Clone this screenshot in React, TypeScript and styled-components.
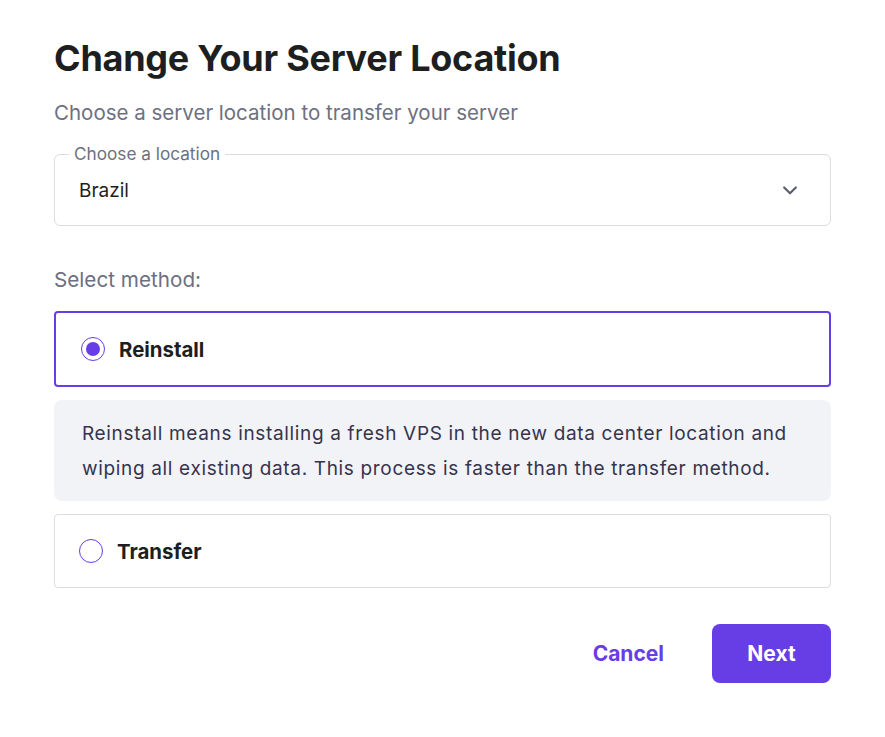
import React, { useState } from "react";
import styled, { createGlobalStyle } from "styled-components";

const Global = createGlobalStyle`
  html, body { margin: 0; padding: 0; background: #ffffff; }
  body { font-family: "Inter", "Noto Sans", sans-serif; color: #1d1e20; }
  * { box-sizing: border-box; }
`;

const Page = styled.div`
  width: 885px;
  padding: 36px 54px 0 54px;
  display: flex;
  flex-direction: column;
`;

const Title = styled.h1`
  margin: 0;
  font-family: "Inter", sans-serif;
  font-weight: 700;
  font-size: 36px;
  line-height: 44px;
  letter-spacing: -0.25px;
  color: #1d1e20;
`;

const Subtitle = styled.p`
  margin: 21px 0 0 0;
  font-family: "Inter", sans-serif;
  font-size: 20.5px;
  line-height: 24px;
  color: #6d7081;
`;

const Field = styled.div`
  margin-top: 29px;
  height: 72px;
  border: 1px solid #dadce0;
  border-radius: 6px;
  padding: 0 30px 0 24px;
  display: flex;
  align-items: center;
  justify-content: space-between;
  position: relative;
`;

const FloatLabel = styled.span`
  position: absolute;
  top: -10px;
  left: 14px;
  padding: 0 5px;
  background: #ffffff;
  font-family: "Inter", sans-serif;
  font-size: 17.2px;
  line-height: 18px;
  color: #6d7081;
`;

const Value = styled.span`
  font-family: "Inter", sans-serif;
  font-size: 19px;
  color: #1d1e20;
`;

const SectionLabel = styled.div`
  margin-top: 42px;
  font-family: "Inter", sans-serif;
  font-size: 20.7px;
  line-height: 24px;
  color: #6d7081;
`;

const Option = styled.label<{ $active: boolean }>`
  margin-top: ${(p) => (p.$active ? "19px" : "13px")};
  height: ${(p) => (p.$active ? "76px" : "74px")};
  border: ${(p) => (p.$active ? "2px solid #673de6" : "1px solid #dadce0")};
  border-radius: 4px;
  display: flex;
  align-items: center;
  gap: 14px;
  padding-left: ${(p) => (p.$active ? "25px" : "24px")};
  cursor: pointer;
`;

const Radio = styled.span<{ $checked: boolean }>`
  width: 24px;
  height: 24px;
  border-radius: 50%;
  border: 1.5px solid #673de6;
  display: flex;
  align-items: center;
  justify-content: center;
  &::after {
    content: "";
    display: ${(p) => (p.$checked ? "block" : "none")};
    width: 14px;
    height: 14px;
    border-radius: 50%;
    background: #673de6;
  }
`;

const OptionText = styled.span`
  font-family: "Inter", sans-serif;
  font-weight: 700;
  font-size: 20.4px;
  color: #1d1e20;
`;

const Info = styled.div`
  margin-top: 13px;
  background: #f2f3f6;
  border-radius: 8px;
  padding: 16px 28px 15px 28px;
  font-family: "Inter", sans-serif;
  font-size: 19px;
  letter-spacing: 0.66px;
  line-height: 35px;
  color: #36344d;
`;

const Actions = styled.div`
  margin-top: 36px;
  display: flex;
  justify-content: flex-end;
  align-items: center;
  gap: 24px;
`;

const TextButton = styled.button`
  background: none;
  border: none;
  padding: 0 24px;
  height: 59px;
  font-family: "Inter", sans-serif;
  font-weight: 700;
  font-size: 21px;
  color: #673de6;
  cursor: pointer;
`;

const PrimaryButton = styled.button`
  background: #673de6;
  border: none;
  border-radius: 8px;
  width: 119px;
  height: 59px;
  font-family: "Inter", sans-serif;
  font-weight: 700;
  font-size: 21px;
  color: #ffffff;
  cursor: pointer;
`;

export default function App() {
  const [method, setMethod] = useState<"reinstall" | "transfer">("reinstall");
  return (
    <>
      <Global />
      <Page>
        <Title>Change Your Server Location</Title>
        <Subtitle>Choose a server location to transfer your server</Subtitle>
        <Field>
          <FloatLabel>Choose a location</FloatLabel>
          <Value>Brazil</Value>
          <svg width="20" height="20" viewBox="0 0 24 24" fill="none" stroke="#5b5d6e" strokeWidth="2.6" strokeLinecap="round" strokeLinejoin="round">
            <path d="M5 9l7 7 7-7" />
          </svg>
        </Field>
        <SectionLabel>Select method:</SectionLabel>
        <Option $active={method === "reinstall"} onClick={() => setMethod("reinstall")}>
          <Radio $checked={method === "reinstall"} />
          <OptionText>Reinstall</OptionText>
        </Option>
        <Info>
          Reinstall means installing a fresh VPS in the new data center location and wiping all existing data. This process is faster than the transfer method.
        </Info>
        <Option $active={method === "transfer"} onClick={() => setMethod("transfer")}>
          <Radio $checked={method === "transfer"} />
          <OptionText>Transfer</OptionText>
        </Option>
        <Actions>
          <TextButton>Cancel</TextButton>
          <PrimaryButton>Next</PrimaryButton>
        </Actions>
      </Page>
    </>
  );
}
